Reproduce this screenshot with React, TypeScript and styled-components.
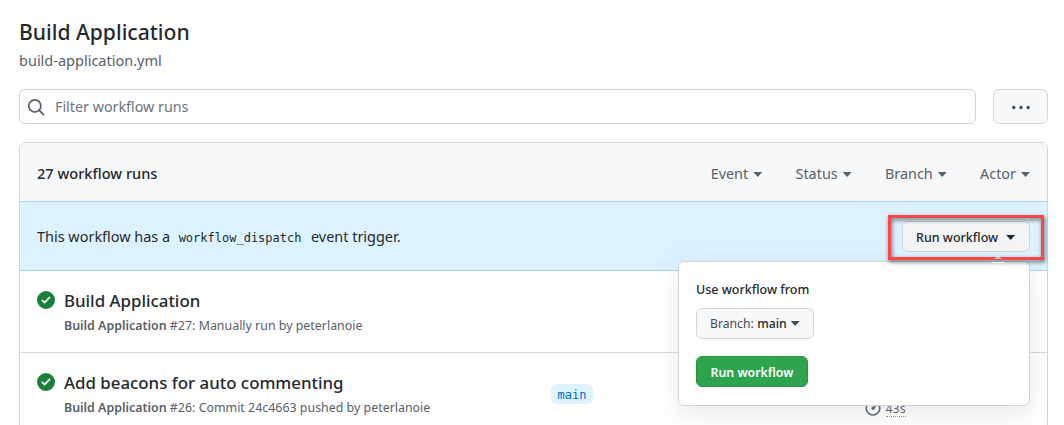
import React from "react";
import styled, { createGlobalStyle, css } from "styled-components";

const sans = `"Noto Sans", "Open Sans", sans-serif`;
const mono = `"DejaVu Sans Mono", "Liberation Mono", monospace`;

const GlobalStyle = createGlobalStyle`
  *, *::before, *::after { box-sizing: border-box; }
  html, body { margin: 0; background: #fff; }
  body { font-family: ${sans}; color: #24292e; height: 425px; overflow: hidden; }
  h1, h2, p { margin: 0; }
  button { font-family: inherit; margin: 0; }
`;

const Page = styled.main`
  height: 425px;
  overflow: hidden;
  padding: 17px 16px 0 19px;
`;

const Title = styled.h1`
  font-size: 21.1px;
  font-weight: 500;
  line-height: 30px;
  white-space: nowrap;
`;

const FileName = styled.p`
  font-size: 14.5px;
  line-height: 24px;
  margin-top: 1px;
  color: #586069;
`;

const Toolbar = styled.div`
  display: flex;
  gap: 17px;
  margin-top: 17px;
`;

const SearchField = styled.div`
  display: flex;
  align-items: center;
  gap: 10px;
  flex: 1;
  height: 35px;
  padding: 1px 0 0 8px;
  border: 1px solid #d1d5da;
  border-radius: 6px;
  color: #586069;
`;

const Placeholder = styled.span`
  font-size: 14.3px;
  line-height: 24px;
  color: #6a737d;
`;

const MoreButton = styled.button`
  display: flex;
  align-items: center;
  justify-content: center;
  width: 55px;
  height: 35px;
  padding: 0;
  border: 1px solid #d5d8dc;
  border-radius: 6px;
  background: #f6f8fa;
  color: #444d56;
`;

const RunList = styled.section`
  height: 320px;
  margin-top: 18px;
  border: 1px solid #d1d5da;
  border-radius: 6px;
`;

const ListHeader = styled.header`
  display: flex;
  align-items: center;
  justify-content: space-between;
  height: 58px;
  padding: 3px 17px 0 17px;
  border-radius: 5px 5px 0 0;
  background: #f6f8fa;
`;

const ListTitle = styled.h2`
  padding-bottom: 2px;
  font-size: 14.6px;
  font-weight: 500;
  line-height: 24px;
`;

const Filters = styled.nav`
  display: flex;
  gap: 33.3px;
`;

const FilterLabel = styled.span`
  display: flex;
  align-items: center;
  gap: 5px;
  font-size: 14.4px;
  line-height: 24px;
  color: #586069;
  i { margin-top: 2px; }
`;

const Caret = styled.i<{ $gap?: number }>`
  width: 9px;
  height: 5px;
  margin-left: ${(p) => p.$gap ?? 0}px;
  background: currentColor;
  clip-path: polygon(0 0, 100% 0, 50% 100%);
`;

const DispatchBar = styled.div`
  position: relative;
  display: flex;
  align-items: center;
  justify-content: space-between;
  height: 70px;
  padding: 0 17px;
  border: solid #a5d5fb;
  border-width: 1px 0;
  background: #dcf2fe;
`;

const DispatchText = styled.p`
  display: flex;
  align-items: baseline;
  padding-top: 2px;
  font-size: 14.45px;
  line-height: 24px;
  white-space: nowrap;
`;

const Code = styled.code`
  margin: 0 9.5px 0 8.5px;
  font-family: ${mono};
  font-size: 12px;
`;

const buttonBase = css`
  display: inline-flex;
  align-items: center;
  height: 31px;
  border: 1px solid #d3d6d9;
  border-radius: 6px;
  font-size: 12.5px;
  line-height: 20px;
  white-space: nowrap;
`;

const RunMenuButton = styled.button`
  ${buttonBase}
  width: 128px;
  padding: 3px 13px 0;
  background: #f3f4f6;
  color: #24292e;
  font-weight: 500;
`;

const BranchButton = styled.button`
  ${buttonBase}
  width: 118px;
  padding: 0 13px;
  background: #f6f8fa;
  color: #444d56;
  font-size: 12.2px;
  strong { margin-left: 3.5px; font-weight: 500; color: #24292e; }
`;

const SubmitButton = styled.button`
  ${buttonBase}
  width: 112px;
  justify-content: center;
  padding: 2px 0 0;
  border-color: #2a9147;
  background: #2ea44f;
  color: #fff;
  font-size: 12.3px;
  font-weight: 600;
`;

const Popover = styled.div`
  position: absolute;
  z-index: 2;
  top: 59px;
  right: 17px;
  display: flex;
  flex-direction: column;
  align-items: flex-start;
  width: 352px;
  height: 145px;
  padding: 18px 17px 0;
  border: 1px solid #d1d5da;
  border-radius: 6px;
  background: #fff;
  box-shadow: 0 8px 26px rgba(149, 157, 165, 0.22);
`;

const PopoverLabel = styled.p`
  font-size: 12.5px;
  font-weight: 500;
  line-height: 20px;
  margin-bottom: 8px;
`;

const PopoverGap = styled.div`
  height: 17px;
`;

const Pointer = styled.svg`
  position: absolute;
  z-index: 4;
  top: 52px;
  right: 41px;
`;

const Highlight = styled.div`
  position: absolute;
  z-index: 3;
  top: 13px;
  right: 3px;
  width: 156px;
  height: 45px;
  border: 3px solid #fc4646;
  filter: drop-shadow(1px 2px 2px rgba(0, 0, 0, 0.6));
`;

const RunRow = styled.article`
  display: grid;
  grid-template-columns: 18px 487px 322.5px auto;
  height: 82px;
  padding: 18px 17px 0;
  border-bottom: 1px solid #d5dbe1;
`;

const StatusIcon = styled.svg`
  margin-top: 2px;
`;

const RunInfo = styled.div`
  padding-left: 9px;
  white-space: nowrap;
`;

const RunTitle = styled.h2`
  font-size: 16.85px;
  font-weight: 500;
  line-height: 24px;
`;

const RunMeta = styled.p`
  margin-top: 3px;
  font-size: 12.42px;
  line-height: 20px;
  color: #586069;
  strong { font-weight: 600; }
`;

const BranchTag = styled.span`
  justify-self: start;
  width: 42px;
  height: 20px;
  margin: 13px 0 0 9px;
  border-radius: 6px;
  background: #ddf4ff;
  color: #0366d6;
  font-family: ${mono};
  font-size: 12px;
  line-height: 22px;
  text-align: center;
`;

const Duration = styled.div`
  display: flex;
  align-items: flex-start;
  gap: 5px;
  margin-top: 29px;
  color: #586069;
  font-size: 12.4px;
  line-height: 17px;
  span { height: 17px; border-bottom: 1px dotted #8b949e; }
`;

const SearchIcon = () => (
  <svg width="17" height="17" viewBox="0 0 16 16" fill="none" stroke="currentColor" strokeWidth="1.6" strokeLinecap="round">
    <circle cx="6.4" cy="6.5" r="5.7" />
    <path d="M10.6 10.7l4 4" />
  </svg>
);

const DotsIcon = () => (
  <svg width="18" height="18" viewBox="0 0 18 18" fill="currentColor">
    <circle cx="1.8" cy="9.5" r="1.7" />
    <circle cx="9" cy="9.5" r="1.7" />
    <circle cx="16.2" cy="9.5" r="1.7" />
  </svg>
);

const CheckIcon = () => (
  <StatusIcon width="18" height="18" viewBox="0 0 16 16" fill="#1a7f37">
    <path fillRule="evenodd" d="M8 16A8 8 0 108 0a8 8 0 000 16zm3.78-9.72a.75.75 0 00-1.06-1.06L6.75 9.19 5.28 7.72a.75.75 0 00-1.06 1.06l2 2a.75.75 0 001.06 0l4.5-4.5z" />
  </StatusIcon>
);

const StopwatchIcon = () => (
  <svg width="16" height="16" viewBox="0 0 16 16" fill="none" stroke="currentColor" strokeWidth="1.7" strokeLinecap="round">
    <path d="M8 1.5V.8M6 .8h4M8 8.500l2.300-2.300" />
    <circle cx="8" cy="8.2" r="6.8" />
    <circle cx="8" cy="8.3" r=".9" fill="currentColor" />
  </svg>
);

type Run = { title: string; number: number; detail: string; branch?: string; duration?: string };

const runs: Run[] = [
  { title: "Build Application", number: 27, detail: "Manually run by peterlanoie" },
  { title: "Add beacons for auto commenting", number: 26, detail: "Commit 24c4663 pushed by peterlanoie", branch: "main", duration: "43s" },
];

const filters = ["Event", "Status", "Branch", "Actor"];

export default function App() {
  return (
    <Page>
      <GlobalStyle />
      <Title>Build Application</Title>
      <FileName>build-application.yml</FileName>
      <Toolbar>
        <SearchField>
          <SearchIcon />
          <Placeholder>Filter workflow runs</Placeholder>
        </SearchField>
        <MoreButton aria-label="More options">
          <DotsIcon />
        </MoreButton>
      </Toolbar>
      <RunList>
        <ListHeader>
          <ListTitle>27 workflow runs</ListTitle>
          <Filters>
            {filters.map((name) => (
              <FilterLabel key={name}>
                {name}
                <Caret />
              </FilterLabel>
            ))}
          </Filters>
        </ListHeader>
        <DispatchBar>
          <DispatchText>
            This workflow has a<Code>workflow_dispatch</Code>event trigger.
          </DispatchText>
          <RunMenuButton>
            Run workflow
            <Caret $gap={8} />
          </RunMenuButton>
          <Popover>
            <PopoverLabel>Use workflow from</PopoverLabel>
            <BranchButton>
              Branch: <strong>main</strong>
              <Caret $gap={4} />
            </BranchButton>
            <PopoverGap />
            <SubmitButton>Run workflow</SubmitButton>
          </Popover>
          <Highlight />
          <Pointer width="16" height="9" viewBox="0 0 16 9">
            <path d="M4.500 5L8 1.500 11.500 5z" fill="#fff" fillOpacity=".75" />
            <path d="M1 9l1.500-1h11l1.500 1z" fill="#fff" fillOpacity=".8" />
          </Pointer>
        </DispatchBar>
        {runs.map((run) => (
          <RunRow key={run.number}>
            <CheckIcon />
            <RunInfo>
              <RunTitle>{run.title}</RunTitle>
              <RunMeta>
                <strong>Build Application</strong> #{run.number}: {run.detail}
              </RunMeta>
            </RunInfo>
            {run.branch && <BranchTag>{run.branch}</BranchTag>}
            {run.duration && (
              <Duration>
                <StopwatchIcon />
                <span>{run.duration}</span>
              </Duration>
            )}
          </RunRow>
        ))}
      </RunList>
    </Page>
  );
}
